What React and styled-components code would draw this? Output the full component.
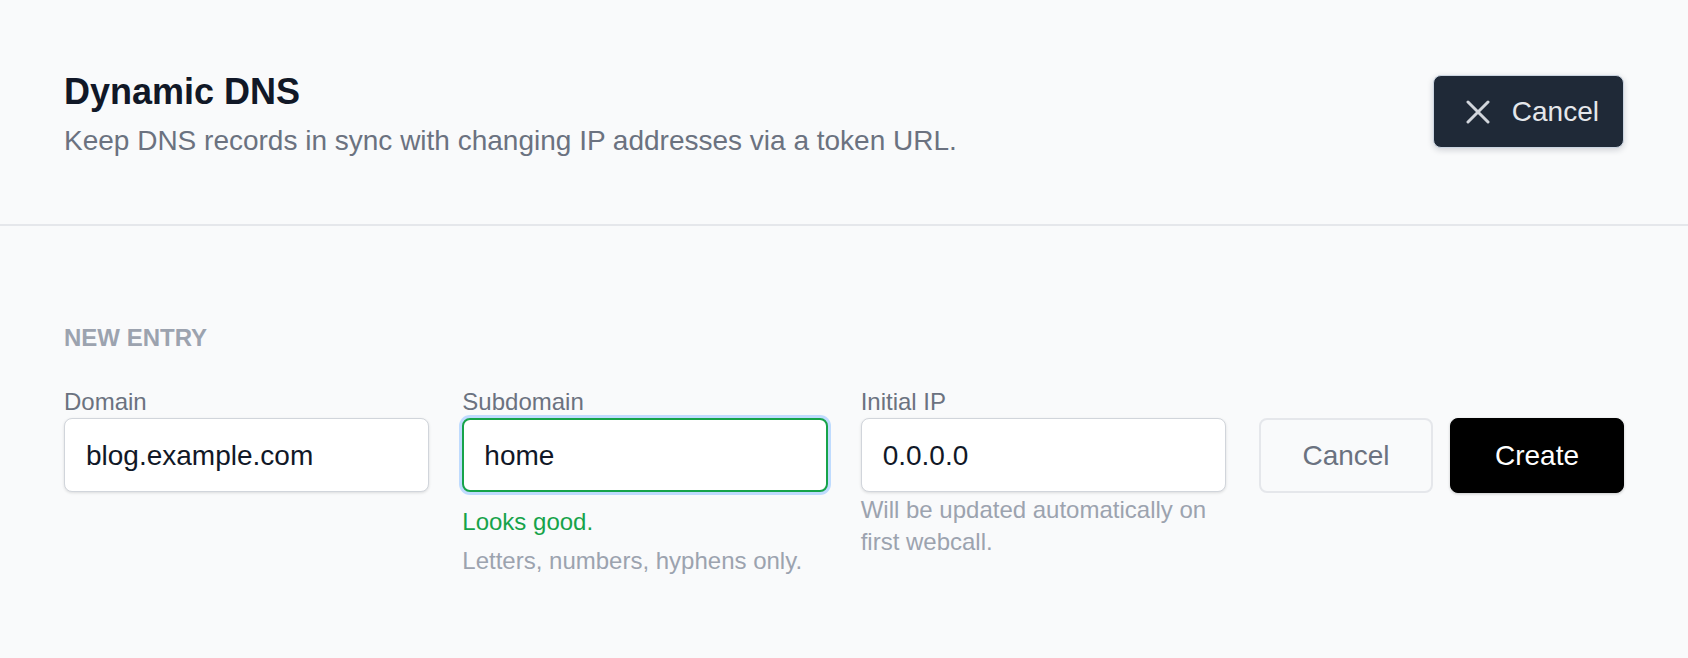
import React, { useState } from 'react';
import styled, { createGlobalStyle, css } from 'styled-components';

const GlobalStyle = createGlobalStyle`
  html, body {
    margin: 0;
    padding: 0;
    background: #f9fafb;
  }
  body {
    font-family: 'Liberation Sans', Arial, Helvetica, sans-serif;
    -webkit-font-smoothing: antialiased;
  }
  * {
    box-sizing: border-box;
  }
`;

const Page = styled.div`
  min-height: 100vh;
  background: #f9fafb;
  color: #111827;
`;

const Header = styled.header`
  display: flex;
  justify-content: space-between;
  align-items: flex-start;
  padding: 69px 64px 62px 64px;
  border-bottom: 2px solid #e5e7eb;
`;

const TitleBlock = styled.div`
  display: flex;
  flex-direction: column;
`;

const Title = styled.h1`
  margin: 0;
  font-size: 36px;
  line-height: 45px;
  font-weight: 700;
  color: #111827;
`;

const Subtitle = styled.p`
  margin: 6px 0 0;
  font-size: 28px;
  line-height: 42px;
  color: #6b7280;
`;

const DarkButton = styled.button`
  display: flex;
  align-items: center;
  gap: 22px;
  margin-top: 6px;
  height: 73px;
  padding: 0 24px 0 32px;
  background: #1f2937;
  color: #e5e7eb;
  border: 1px solid #cbd5e1;
  border-radius: 8px;
  box-shadow: 0 2px 6px rgba(15, 23, 42, 0.18);
  font-family: inherit;
  font-size: 28px;
  cursor: pointer;
`;

const Body = styled.main`
  padding: 95px 64px 40px;
`;

const SectionLabel = styled.h2`
  margin: 0 0 31px;
  font-size: 24px;
  line-height: 33px;
  font-weight: 700;
  text-transform: uppercase;
  color: #9ca3af;
`;

const FormRow = styled.form`
  display: grid;
  grid-template-columns: repeat(3, 1fr) auto;
  column-gap: 33px;
  align-items: start;
`;

const Field = styled.div`
  display: flex;
  flex-direction: column;
  min-width: 0;
`;

const Label = styled.label`
  font-size: 24px;
  line-height: 33px;
  color: #6b7280;
`;

const Input = styled.input`
  width: 100%;
  height: 74px;
  padding: 2px 20px 0 21px;
  background: #fff;
  border: 1px solid #d1d5db;
  border-radius: 8px;
  box-shadow: 0 1px 3px rgba(0, 0, 0, 0.12);
  font-family: inherit;
  font-size: 28px;
  color: #111827;
  outline: none;

  ${(p) =>
    p.$valid &&
    css`
      padding-left: 20px;
      border: 2px solid #16a34a;
      box-shadow: 0 0 0 3px #bfdbfe;
    `}
`;

const Feedback = styled.div`
  margin-top: 13px;
  font-size: 24px;
  line-height: 33px;
  color: #16a34a;
`;

const Hint = styled.div`
  margin-top: ${(p) => p.$gap || 1}px;
  font-size: 24px;
  line-height: 32px;
  color: #9ca3af;
`;

const Actions = styled.div`
  display: flex;
  gap: 17px;
  margin-top: 33px;
`;

const Button = styled.button`
  width: 174px;
  height: 75px;
  padding-top: 2px;
  border-radius: 8px;
  font-family: inherit;
  font-size: 28px;
  cursor: pointer;

  ${(p) =>
    p.$primary
      ? css`
          background: #000;
          color: #fff;
          border: 1px solid #000;
          box-shadow: 0 1px 3px rgba(0, 0, 0, 0.2);
        `
      : css`
          background: #f9fafb;
          color: #6b7280;
          border: 2px solid #e5e7eb;
        `}
`;

const CloseIcon = () => (
  <svg width="24" height="24" viewBox="0 0 24 24" fill="none" stroke="#d1d5db" strokeWidth="3" strokeLinecap="round">
    <path d="M2 2L22 22M22 2L2 22" />
  </svg>
);

const App = () => {
  const [domain, setDomain] = useState('blog.example.com');
  const [sub, setSub] = useState('home');
  const [ip, setIp] = useState('0.0.0.0');

  return (
    <Page>
      <GlobalStyle />
      <Header>
        <TitleBlock>
          <Title>Dynamic DNS</Title>
          <Subtitle>Keep DNS records in sync with changing IP addresses via a token URL.</Subtitle>
        </TitleBlock>
        <DarkButton type="button">
          <CloseIcon />
          Cancel
        </DarkButton>
      </Header>

      <Body>
        <SectionLabel>New entry</SectionLabel>
        <FormRow onSubmit={(e) => e.preventDefault()}>
          <Field>
            <Label htmlFor="domain">Domain</Label>
            <Input id="domain" value={domain} onChange={(e) => setDomain(e.target.value)} />
          </Field>
          <Field>
            <Label htmlFor="sub">Subdomain</Label>
            <Input id="sub" $valid value={sub} onChange={(e) => setSub(e.target.value)} />
            <Feedback>Looks good.</Feedback>
            <Hint $gap={7}>Letters, numbers, hyphens only.</Hint>
          </Field>
          <Field>
            <Label htmlFor="ip">Initial IP</Label>
            <Input id="ip" value={ip} onChange={(e) => setIp(e.target.value)} />
            <Hint $gap={2}>Will be updated automatically on first webcall.</Hint>
          </Field>
          <Actions>
            <Button type="button">Cancel</Button>
            <Button type="submit" $primary>Create</Button>
          </Actions>
        </FormRow>
      </Body>
    </Page>
  );
};

export default App;
